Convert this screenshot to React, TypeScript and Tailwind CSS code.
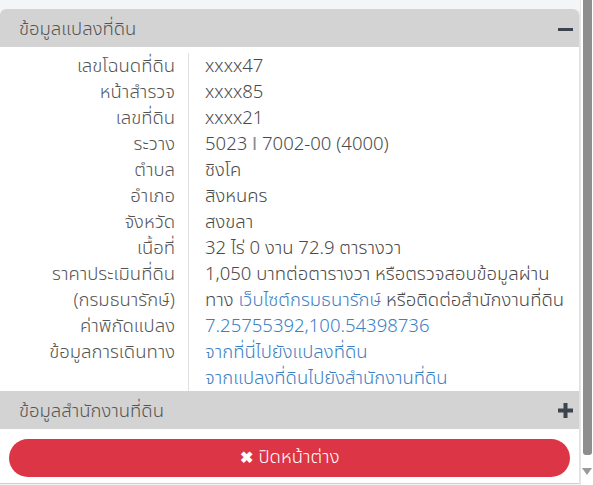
import { Fragment } from "react"

type Row = { label: string; lines: React.ReactNode[] }

const link = "text-[#3b7fc4]"

const rows: Row[] = [
  { label: "เลขโฉนดที่ดิน", lines: ["xxxx47"] },
  { label: "หน้าสำรวจ", lines: ["xxxx85"] },
  { label: "เลขที่ดิน", lines: ["xxxx21"] },
  {
    label: "ระวาง",
    lines: [
      <>
        5023 <span className="font-['Liberation_Sans'] font-normal text-[#8a8a8a]">I</span> 7002-00 (4000)
      </>,
    ],
  },
  { label: "ตำบล", lines: ["ชิงโค"] },
  { label: "อำเภอ", lines: ["สิงหนคร"] },
  { label: "จังหวัด", lines: ["สงขลา"] },
  { label: "เนื้อที่", lines: ["32 ไร่ 0 งาน 72.9 ตารางวา"] },
  { label: "ราคาประเมินที่ดิน", lines: ["1,050 บาทต่อตารางวา หรือตรวจสอบข้อมูลผ่าน"] },
  {
    label: "(กรมธนารักษ์)",
    lines: [
      <>
        ทาง <span className={link}>เว็บไซต์กรมธนารักษ์</span> หรือติดต่อสำนักงานที่ดิน
      </>,
    ],
  },
  { label: "ค่าพิกัดแปลง", lines: [<span className={link}>7.25755392,100.54398736</span>] },
  {
    label: "ข้อมูลการเดินทาง",
    lines: [
      <span className={link}>จากที่นี่ไปยังแปลงที่ดิน</span>,
      <span className={link}>จากแปลงที่ดินไปยังสำนักงานที่ดิน</span>,
    ],
  },
]

function Minus() {
  return <span className="block w-[15px] h-[3px] bg-[#3d4450]" />
}

function Plus() {
  return (
    <svg width="15" height="15" viewBox="0 0 15 15">
      <rect x="0" y="5.5" width="15" height="4" fill="#3d4450" />
      <rect x="5.5" y="0" width="4" height="15" fill="#3d4450" />
    </svg>
  )
}

export default function App() {
  return (
    <div
      className="w-[593px] h-[485px] flex bg-white overflow-hidden text-[18.5px] font-light text-[#555]"
      style={{ fontFamily: '"Noto Sans Thai", "Noto Sans", "Liberation Sans", sans-serif' }}
    >
      <div className="w-[580px] flex flex-col bg-[#f4f5f6] pt-[9px]">
        {/* parcel info */}
        <div className="bg-white rounded-t-[6px] border-r border-[#e2e2e2]">
          <div className="h-[38px] flex items-center justify-between pl-[19px] pr-[6px] pt-[3px] bg-[#d3d3d3] rounded-t-[6px]">
            <span>ข้อมูลแปลงที่ดิน</span>
            <Minus />
          </div>
          <div className="grid grid-cols-[188px_1fr] pt-[6px]">
            {rows.map((r) => (
              <Fragment key={r.label}>
                <div className="text-right pr-[13px] leading-[26px]">{r.label}</div>
                <div className="border-l border-[#e0e0e0] pl-[16px] leading-[26px] text-[#4a4a4a] whitespace-nowrap">
                  {r.lines.map((l, i) => (
                    <div key={i}>{l}</div>
                  ))}
                </div>
              </Fragment>
            ))}
          </div>
          <div className="h-[38px] flex items-center justify-between pl-[19px] pr-[6px] bg-[#d3d3d3]">
            <span className="pt-[3px]">ข้อมูลสำนักงานที่ดิน</span>
            <Plus />
          </div>
          <div className="px-[9px] pt-[10px] pb-[6px] border-b border-[#cfcfcf]">
            <button className="w-full h-[38px] rounded-full bg-[#dc3545] text-white flex items-center justify-center gap-[6px]">
              <span className="font-bold text-[16px]">✖</span>
              <span>ปิดหน้าต่าง</span>
            </button>
          </div>
        </div>
      </div>
      {/* scrollbar */}
      <div className="w-[13px] flex flex-col items-center border-l border-[#e6e6e6] bg-white">
        <div className="w-[9px] h-[455px] bg-[#8e8e8e] rounded-b-[3px]" />
        <div className="mt-[13px] w-0 h-0 border-l-[5px] border-r-[5px] border-t-[7px] border-l-transparent border-r-transparent border-t-[#9a9a9a]" />
      </div>
    </div>
  )
}
